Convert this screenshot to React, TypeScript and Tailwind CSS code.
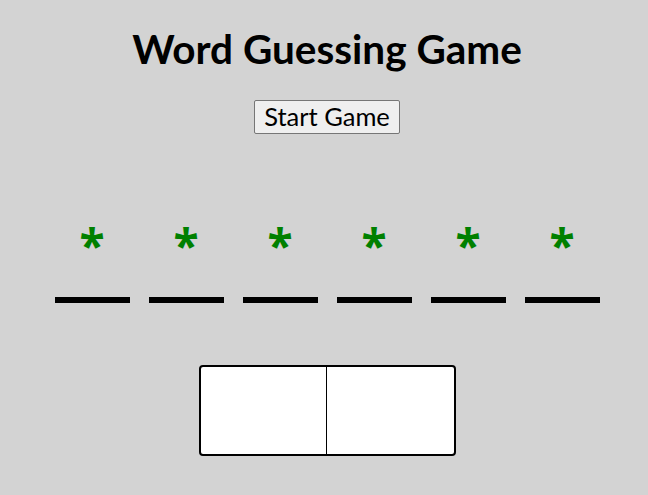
export default function App() {
  const letters = ["*", "*", "*", "*", "*", "*"];
  return (
    <div
      className="min-h-[495px] bg-[#d3d3d3] pl-[6px] text-center text-black"
      style={{ fontFamily: '"Trebuchet MS", Lato, sans-serif' }}
    >
      <h1 className="pt-[26px] text-[40.5px] font-bold leading-[46px]">Word Guessing Game</h1>
      <div className="mt-[28px] flex justify-center">
        <button className="h-[34px] rounded-[2px] border border-[#767676] bg-[#efefef] px-[9px] text-[25.5px] leading-none">
          Start Game
        </button>
      </div>
      <div className="mt-[83px] flex justify-center gap-[19px]">
        {letters.map((l, i) => (
          <div key={i} className="flex w-[75px] flex-col items-center">
            <span
              className="h-[56px] text-[46px] font-bold leading-[56px] text-[#008000]"
              style={{ fontFamily: '"Open Sans", sans-serif' }}
            >
              {l}
            </span>
            <div className="mt-[24px] h-[6px] w-[75px] bg-black" />
          </div>
        ))}
      </div>
      <div className="mt-[62px] flex justify-center">
        <div className="flex h-[91px] w-[257px] overflow-hidden rounded-[4px] border-2 border-black bg-white">
          <div className="w-1/2 border-r border-black" />
          <div className="w-1/2" />
        </div>
      </div>
    </div>
  );
}
